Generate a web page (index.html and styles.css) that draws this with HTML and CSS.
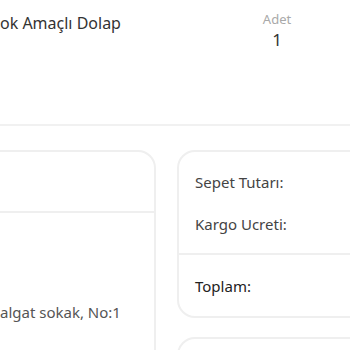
FILE: index.html
```html
<!DOCTYPE html>
<html lang="tr">
<head>
    <meta charset="UTF-8">
    <meta name="viewport" content="width=device-width, initial-scale=1.0">
    <title>Sepetim</title>
    <link rel="stylesheet" href="styles.css">
</head>
<body>
    <div class="page">
        <div class="product">
            <div class="product-name">ok Amaçlı Dolap</div>
            <div class="product-qty">
                <span class="qty-label">Adet</span>
                <span class="qty-value">1</span>
            </div>
        </div>

        <div class="summary">
            <div class="card address-card">
                <div class="card-head"></div>
                <div class="card-body">
                    <p class="address">algat sokak, No:1</p>
                </div>
            </div>

            <div class="side">
                <div class="card total-card">
                    <div class="total-rows">
                        <div class="row">Sepet Tutarı:</div>
                        <div class="row">Kargo Ucreti:</div>
                    </div>
                    <div class="total-sum">
                        <div class="row strong">Toplam:</div>
                    </div>
                </div>
                <div class="card next-card"></div>
            </div>
        </div>
    </div>
</body>
</html>
```

FILE: styles.css
```css
body {
    margin: 0;
    font-family: "Noto Sans", sans-serif;
    background-color: #fff;
    color: #3a3a3a;
    overflow: hidden;
}
.page {
    width: 350px;
    height: 350px;
    overflow: hidden;
}
.product {
    display: flex;
    justify-content: space-between;
    height: 126px;
    padding-top: 11px;
    box-sizing: border-box;
    border-bottom: 2px solid #f1f1f1;
}
.product-name {
    font-size: 16px;
    line-height: 22px;
    color: #333;
    margin-top: 1px;
}
.product-qty {
    display: flex;
    flex-direction: column;
    align-items: center;
    width: 40px;
    margin-right: 53px;
}
.qty-label {
    font-size: 13px;
    line-height: 16px;
    color: #a9a9a9;
}
.qty-value {
    font-size: 17px;
    line-height: 22px;
    color: #333;
    margin-top: 2px;
}
.summary {
    display: flex;
    gap: 21px;
    margin-top: 24px;
}
.card {
    border: 2px solid #efefef;
    border-radius: 18px;
    box-sizing: border-box;
}
.address-card {
    width: 178px;
    margin-left: -22px;
    height: 240px;
    flex-shrink: 0;
}
.card-head {
    height: 59px;
    border-bottom: 2px solid #efefef;
}
.card-body {
    padding: 89px 0 0 20px;
}
.address {
    margin: 0;
    font-size: 15px;
    line-height: 20px;
    color: #555;
}
.side {
    display: flex;
    flex-direction: column;
    gap: 19px;
    width: 220px;
    flex-shrink: 0;
}
.total-card {
    height: 168px;
}
.total-rows {
    display: flex;
    flex-direction: column;
    gap: 22px;
    padding: 20px 0 19px 16px;
    border-bottom: 2px solid #efefef;
}
.total-sum {
    padding: 21px 0 0 16px;
}
.row {
    font-size: 15px;
    line-height: 20px;
    color: #444;
}
.row.strong {
    color: #222;
}
.next-card {
    height: 60px;
}
```
